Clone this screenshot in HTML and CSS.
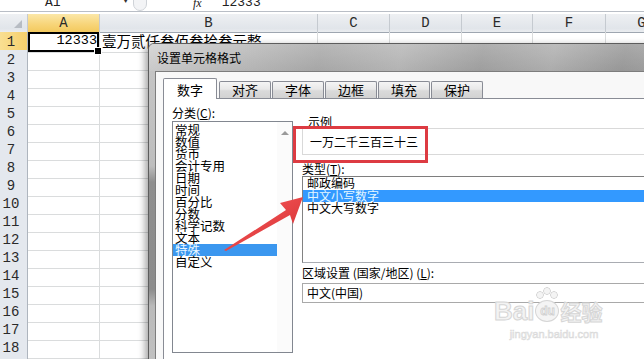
FILE: index.html
```html
<!DOCTYPE html>
<html lang="zh-CN">
<head>
<meta charset="utf-8">
<title>设置单元格格式</title>
<link rel="stylesheet" href="styles.css">
</head>
<body>
<div class="screen">
  <div class="formula-bar">
    <div class="name-box"><span class="name">A1</span><span class="drop">▼</span></div>
    <div class="cap"></div>
    <span class="fx">fx</span>
    <span class="formula">12333</span>
  </div>

  <div class="sheet">
    <div class="row head"><span class="corner"><svg width="10" height="10" viewBox="0 0 10 10"><path d="M9 1 L9 9 L1 9 Z" fill="#b7bcc3"/></svg></span><span class="ch active">A</span><span class="ch">B</span><span class="ch">C</span><span class="ch">D</span><span class="ch">E</span><span class="ch">F</span><span class="ch">G</span></div>
    <div class="row"><span class="rh active">1</span><span class="cell num sel">12333</span><span class="cell txt">壹万贰仟叁佰叁拾叁元整</span><span></span><span></span><span></span><span></span><span></span></div>
    <div class="row"><span class="rh">2</span><span></span><span></span><span></span><span></span><span></span><span></span><span></span></div>
    <div class="row"><span class="rh">3</span><span></span><span></span><span></span><span></span><span></span><span></span><span></span></div>
    <div class="row"><span class="rh">4</span><span></span><span></span><span></span><span></span><span></span><span></span><span></span></div>
    <div class="row"><span class="rh">5</span><span></span><span></span><span></span><span></span><span></span><span></span><span></span></div>
    <div class="row"><span class="rh">6</span><span></span><span></span><span></span><span></span><span></span><span></span><span></span></div>
    <div class="row"><span class="rh">7</span><span></span><span></span><span></span><span></span><span></span><span></span><span></span></div>
    <div class="row"><span class="rh">8</span><span></span><span></span><span></span><span></span><span></span><span></span><span></span></div>
    <div class="row"><span class="rh">9</span><span></span><span></span><span></span><span></span><span></span><span></span><span></span></div>
    <div class="row"><span class="rh">10</span><span></span><span></span><span></span><span></span><span></span><span></span><span></span></div>
    <div class="row"><span class="rh">11</span><span></span><span></span><span></span><span></span><span></span><span></span><span></span></div>
    <div class="row"><span class="rh">12</span><span></span><span></span><span></span><span></span><span></span><span></span><span></span></div>
    <div class="row"><span class="rh">13</span><span></span><span></span><span></span><span></span><span></span><span></span><span></span></div>
    <div class="row"><span class="rh">14</span><span></span><span></span><span></span><span></span><span></span><span></span><span></span></div>
    <div class="row"><span class="rh">15</span><span></span><span></span><span></span><span></span><span></span><span></span><span></span></div>
    <div class="row"><span class="rh">16</span><span></span><span></span><span></span><span></span><span></span><span></span><span></span></div>
    <div class="row"><span class="rh">17</span><span></span><span></span><span></span><span></span><span></span><span></span><span></span></div>
    <div class="row"><span class="rh">18</span><span></span><span></span><span></span><span></span><span></span><span></span><span></span></div>
    <div class="row"><span class="rh">19</span><span></span><span></span><span></span><span></span><span></span><span></span><span></span></div>
  </div>

  <div class="dialog">
    <div class="titlebar">设置单元格格式</div>
    <div class="dlg-body">
      <div class="tabs">
        <span class="tab selected">数字</span>
        <span class="tab">对齐</span>
        <span class="tab">字体</span>
        <span class="tab">边框</span>
        <span class="tab">填充</span>
        <span class="tab">保护</span>
      </div>
      <div class="panel">
        <div class="col-left">
          <div class="label">分类(<u>C</u>):</div>
          <div class="cat-list">
            <ul class="items">
              <li>常规</li>
              <li>数值</li>
              <li>货币</li>
              <li>会计专用</li>
              <li>日期</li>
              <li>时间</li>
              <li>百分比</li>
              <li>分数</li>
              <li>科学记数</li>
              <li>文本</li>
              <li class="picked">特殊</li>
              <li>自定义</li>
            </ul>
            <div class="vscroll"><span class="up-arrow"></span></div>
          </div>
        </div>
        <div class="col-right">
          <div class="label sample-label">示例</div>
          <div class="sample">一万二千三百三十三</div>
          <div class="highlight"></div>
          <div class="label type-label">类型(<u>T</u>):</div>
          <ul class="type-list">
            <li>邮政编码</li>
            <li class="picked">中文小写数字</li>
            <li>中文大写数字</li>
          </ul>
          <div class="label locale-label">区域设置 (国家/地区) (<u>L</u>):</div>
          <div class="combo">中文(中国)</div>
        </div>
      </div>
    </div>
  </div>

  <svg class="arrow" width="644" height="359" viewBox="0 0 644 359">
    <defs>
      <linearGradient id="ag" x1="0" y1="0" x2="1" y2="1">
        <stop offset="0" stop-color="#ff6161"/>
        <stop offset="1" stop-color="#cf2a2e"/>
      </linearGradient>
    </defs>
    <polygon points="303,197 280,203 286,210 224,250 226,251 290,215 293,224" fill="url(#ag)"/>
  </svg>

  <div class="watermark">
    <div class="wm-main"><span class="wm-bai">Bai</span><span class="wm-paw"><span class="wm-du">du</span></span><span class="wm-jy">经验</span></div>
    <div class="wm-url">jingyan.baidu.com</div>
  </div>
</div>
</body>
</html>
```

FILE: styles.css
```css
* { box-sizing: border-box; }
html, body { margin: 0; padding: 0; }
body {
  background: #fff;
  font-family: "Noto Sans CJK SC", "Liberation Sans", sans-serif;
  color: #000;
}
.screen {
  position: relative;
  width: 644px;
  height: 359px;
  overflow: hidden;
  background: #fff;
}

/* formula bar */
.formula-bar {
  display: flex;
  align-items: flex-end;
  height: 12px;
  border-bottom: 1px solid #b9bec6;
  overflow: hidden;
  font-family: "Liberation Mono", "Noto Sans CJK SC", monospace;
  font-size: 13px;
  line-height: 16px;
  color: #222;
}
.name-box {
  display: flex;
  align-items: flex-end;
  width: 131px;
  padding-left: 45px;
  padding-right: 3px;
}
.drop {
  margin-left: auto;
  font-size: 8px;
  line-height: 10px;
  padding-bottom: 5px;
  color: #333;
}
.cap {
  width: 14px;
  height: 18px;
  margin-left: 2px;
  border: 1px solid #cfd3d8;
  border-radius: 0 0 8px 8px;
  background: #f3f4f6;
}
.fx {
  margin-left: 46px;
  font-family: "Liberation Serif", serif;
  font-style: italic;
  font-size: 12px;
}
.formula { margin-left: 20px; }

/* sheet */
.sheet { margin-top: 2px; }
.row {
  display: grid;
  grid-template-columns: 28px 72px 218px 72px 72px 71px 73px 72px;
  height: 18px;
}
.row > span {
  border-right: 1px solid #dadcdd;
  border-bottom: 1px solid #dadcdd;
}
.head > span {
  background: linear-gradient(#eef0f3, #e1e5ea 80%, #eaedf0);
  border-right: 1px solid #c5cad0;
  border-bottom: 1px solid #9ea6b0;
  font-family: "Liberation Mono", monospace;
  font-size: 14px;
  line-height: 18px;
  text-align: center;
  color: #2a2a2a;
}
.head > .ch.active {
  background: linear-gradient(#fbe7a8, #f7d477 60%, #f3c95e);
  border-bottom-color: #c99a3a;
}
.head > .corner {
  display: flex;
  align-items: flex-end;
  justify-content: flex-end;
  padding: 0 4px 3px 0;
}
.row > .rh {
  background: #e4e8ee;
  border-right: 1px solid #aeb5be;
  border-bottom: 1px solid #c6ccd3;
  font-family: "Liberation Mono", monospace;
  font-size: 14px;
  line-height: 20px;
  text-align: center;
  padding-right: 5px;
  color: #2a2a2a;
}
.row > .rh.active {
  background: linear-gradient(90deg, #f9df92, #f5cf6c);
}
.cell.num {
  font-family: "Liberation Mono", monospace;
  font-size: 13.5px;
  line-height: 18px;
  text-align: right;
  padding-right: 2px;
}
.cell.sel {
  position: relative;
  box-shadow: inset 0 0 0 2px #000;
}
.cell.sel::after {
  content: "";
  position: absolute;
  right: -3px;
  bottom: -3px;
  width: 6px;
  height: 6px;
  background: #000;
  border: 1px solid #fff;
}
.cell.txt {
  white-space: nowrap;
  overflow: visible;
  font-size: 14.5px;
  line-height: 18px;
  padding-left: 2px;
}

/* dialog window */
.dialog {
  position: absolute;
  left: 148px;
  top: 43px;
  width: 520px;
  height: 330px;
  display: flex;
  flex-direction: column;
  border: 1px solid #5d5d5d;
  border-radius: 6px 6px 0 0;
  background: linear-gradient(180deg, #c6c6c6 0, #bdbdbd 122px, #8e8e8e 138px, #8b8b8b 245px, #b9b9b9 262px, #c2c2c2 100%);
  box-shadow: -3px 2px 7px rgba(0, 0, 0, 0.35);
}
.titlebar {
  flex: none;
  height: 27px;
  padding-left: 8px;
  font-size: 12px;
  line-height: 27px;
  border-radius: 5px 5px 0 0;
  background:
    linear-gradient(rgba(255,255,255,0.12), rgba(0,0,0,0.04)),
    linear-gradient(100deg, #d2d2d2 0, #c2c2c2 70px, #adadad 170px, #bababa 250px, #a4a4a4 330px, #b3b3b3 400px, #9d9d9d 470px, #a8a8a8 520px);
}
.dlg-body {
  flex: 1;
  margin-left: 6px;
  border-left: 1px solid #7d7d7d;
  border-top: 1px solid #7d7d7d;
  background: #f8f8f8;
  padding: 6px 0 0 7px;
}
.tabs {
  display: flex;
  align-items: flex-end;
  height: 20px;
}
.tab {
  width: 52px;
  height: 17px;
  margin-left: 1px;
  border: 1px solid #898c95;
  border-bottom: none;
  border-radius: 2px 2px 0 0;
  background: linear-gradient(#f5f5f5, #e8e8e8 45%, #dadada 55%, #d2d2d2);
  font-size: 13px;
  line-height: 16px;
  text-align: center;
}
.tab.selected {
  width: 54px;
  height: 21px;
  margin-left: 0;
  margin-right: 1px;
  margin-bottom: -1px;
  padding-top: 2px;
  line-height: 18px;
  background: #fff;
  position: relative;
  z-index: 1;
}
.panel {
  height: 270px;
  border: 1px solid #898c95;
  background: #fff;
  padding: 7px 0 0 8px;
  display: grid;
  grid-template-columns: 121px 1fr;
  column-gap: 9px;
  align-items: start;
}
.label {
  font-size: 12px;
  line-height: 14px;
  white-space: nowrap;
}

/* category list */
.cat-list {
  margin-top: 1px;
  height: 232px;
  border: 1px solid #828790;
  display: flex;
}
.items {
  flex: 1;
  list-style: none;
  margin: 0;
  padding: 2px 0 0 0;
  font-size: 12.5px;
  line-height: 12px;
}
.items li { padding-left: 2px; white-space: nowrap; }
.items li.picked { background: #3b97ef; color: #e9f6ff; }
.vscroll {
  flex: none;
  width: 15px;
  background: #fbfbfb;
  display: flex;
  justify-content: center;
  padding-top: 9px;
}
.up-arrow {
  width: 0;
  height: 0;
  border-left: 4px solid transparent;
  border-right: 4px solid transparent;
  border-bottom: 4px solid #9a9a9a;
}

/* right column */
.col-right { position: relative; }
.sample-label { margin-top: 10px; line-height: 12px; padding-left: 6px; }
.sample {
  height: 27px;
  border: 1px solid #d9d9d9;
  font-size: 12px;
  line-height: 25px;
  padding-left: 7px;
}
.highlight {
  position: absolute;
  left: -9px;
  top: 20px;
  width: 135px;
  height: 37px;
  border: 3px solid #dd3b42;
}
.type-label { margin-top: 7px; line-height: 13px; }
.type-list {
  list-style: none;
  margin: 1px 0 0 0;
  padding: 0;
  height: 87px;
  border: 1px solid #a9acb2;
  border-top-color: #7e7e7e;
  border-left-color: #828282;
  font-size: 12px;
  line-height: 12.5px;
}
.type-list li { padding-left: 4px; white-space: nowrap; }
.type-list li.picked { background: #3399ff; color: #e4f6ff; }
.locale-label { margin-top: 3px; }
.combo {
  margin-top: 3px;
  height: 20px;
  border: 1px solid #a9a9a9;
  font-size: 12px;
  line-height: 18px;
  padding-left: 4px;
}

/* annotation arrow */
.arrow {
  position: absolute;
  left: 0;
  top: 0;
  pointer-events: none;
}

/* watermark */
.watermark {
  position: absolute;
  left: 494px;
  top: 286px;
  width: 120px;
  text-align: center;
  pointer-events: none;
}
.wm-main {
  display: flex;
  align-items: flex-end;
  height: 38px;
}
.wm-bai {
  font-family: "Liberation Sans", sans-serif;
  font-weight: bold;
  font-size: 26px;
  line-height: 26px;
  color: #f3f3f3;
  -webkit-text-stroke: 1px #d6d6d6;
}
.wm-paw {
  position: relative;
  width: 24px;
  height: 22px;
  margin: 0 1px 2px 1px;
  border: 1px solid #d6d6d6;
  border-radius: 50%;
  background: #f4f4f4;
  display: flex;
  align-items: center;
  justify-content: center;
}
.wm-paw::before {
  content: "";
  position: absolute;
  left: 0;
  top: -14px;
  width: 22px;
  height: 12px;
  background:
    radial-gradient(circle at 4px 8px, #f4f4f4 2.5px, #d6d6d6 3.5px, transparent 4px),
    radial-gradient(circle at 11px 4px, #f4f4f4 2.5px, #d6d6d6 3.5px, transparent 4px),
    radial-gradient(circle at 18px 8px, #f4f4f4 2.5px, #d6d6d6 3.5px, transparent 4px);
}
.wm-du {
  font-family: "Liberation Sans", sans-serif;
  font-weight: bold;
  font-size: 12px;
  color: #f3f3f3;
  -webkit-text-stroke: 0.8px #d0d0d0;
}
.wm-jy {
  font-size: 21px;
  line-height: 26px;
  font-weight: bold;
  color: #f3f3f3;
  -webkit-text-stroke: 1px #d6d6d6;
}
.wm-url {
  font-family: "Liberation Sans", sans-serif;
  font-size: 11px;
  line-height: 14px;
  color: #ececec;
  -webkit-text-stroke: 0.5px #d9d9d9;
  margin-top: 3px;
}
```
